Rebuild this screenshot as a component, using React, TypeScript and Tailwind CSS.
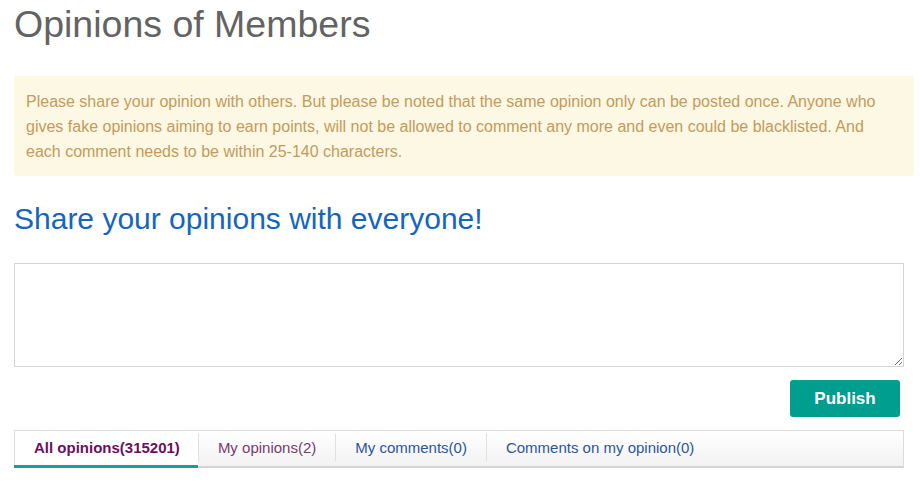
import React from "react";

export default function App() {
  const font = { fontFamily: '"Liberation Sans", Arial, sans-serif' };
  return (
    <div className="w-[920px] h-[491px] bg-white overflow-hidden" style={font}>
      <div className="pl-[14px]">
        <h1 className="text-[37.5px] leading-[48px] text-[#636363] font-normal m-0">
          Opinions of Members
        </h1>
        <div className="mt-[28px] w-[900px] bg-[#fcf8e3] rounded-[3px] pt-[13px] pb-[12px] px-[12px] text-[16px] leading-[25px] text-[#c39b5c]">
          Please share your opinion with others. But please be noted that the same opinion only can be posted once. Anyone who gives fake opinions aiming to earn points, will not be allowed to comment any more and even could be blacklisted. And each comment needs to be within 25-140 characters.
        </div>
        <h2 className="mt-[25px] text-[30px] leading-[36px] text-[#1565c0] font-normal">
          Share your opinions with everyone!
        </h2>
        <div className="w-[890px]">
          <textarea
            className="mt-[26px] block w-[890px] h-[104px] border border-[#d4d4d4] bg-white outline-none"
            style={font}
          />
          <div className="flex justify-end mt-[13px] pr-[4px]">
            <button className="w-[110px] h-[37px] rounded-[3px] bg-[#009e8f] text-white font-bold text-[17px] leading-[37px] text-center">
              Publish
            </button>
          </div>
          <div className="mt-[13px] h-[38px] border border-[#dcdcdc] border-b-2 border-b-[#d2d2d2] bg-gradient-to-b from-white to-[#f2f2f2] flex items-stretch text-[15px]">
            <div className="relative pl-[19px] pr-[18px] flex items-center font-bold text-[#6a105d] bg-white">
              All opinions(315201)
              <span className="absolute left-[-1px] right-0 bottom-[-2px] h-[3px] bg-[#14a096]" />
            </div>
            <div className="w-px my-[3px] mb-[5px] bg-[#e0e0e0]" />
            <div className="px-[19px] flex items-center text-[#7a3a70]">My opinions(2)</div>
            <div className="w-px my-[3px] mb-[5px] bg-[#e0e0e0]" />
            <div className="px-[19px] flex items-center text-[#2c5697]">My comments(0)</div>
            <div className="w-px my-[3px] mb-[5px] bg-[#e0e0e0]" />
            <div className="px-[19px] flex items-center text-[#2c5697]">Comments on my opinion(0)</div>
          </div>
        </div>
      </div>
    </div>
  );
}
